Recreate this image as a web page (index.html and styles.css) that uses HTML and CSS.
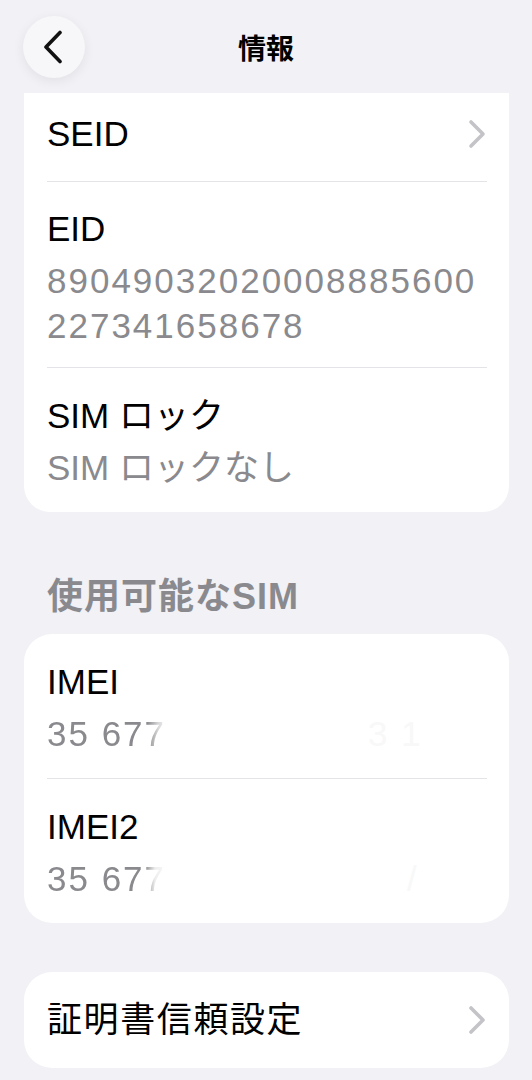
FILE: index.html
```html
<!DOCTYPE html>
<html lang="ja">
<head>
<meta charset="utf-8">
<title>情報</title>
<link rel="stylesheet" href="styles.css">
</head>
<body>
<div class="screen">
  <header class="nav">
    <button class="back" aria-label="戻る">
      <svg width="20" height="34" viewBox="0 0 20 34"><path d="M17 2.5 L3 17 L17 31.5" fill="none" stroke="#111" stroke-width="3.6" stroke-linecap="round" stroke-linejoin="round"/></svg>
    </button>
    <h1 class="title">情報</h1>
    <span class="nav-spacer"></span>
  </header>

  <main class="content">
    <section class="card card-top">
      <div class="row row-link row-seid">
        <span class="label">SEID</span>
        <svg class="chev" width="18" height="30" viewBox="0 0 18 30"><path d="M3 3 L15 15 L3 27" fill="none" stroke="#c4c4c8" stroke-width="3.6" stroke-linecap="round" stroke-linejoin="round"/></svg>
      </div>
      <div class="row row-eid">
        <div class="label">EID</div>
        <div class="value digits">89049032020008885600<br>227341658678</div>
      </div>
      <div class="row row-pair">
        <div class="label">SIM ロック</div>
        <div class="value">SIM ロックなし</div>
      </div>
    </section>

    <h2 class="section-title">使用可能なSIM</h2>

    <section class="card">
      <div class="row row-pair">
        <div class="label">IMEI</div>
        <div class="value digits"><span class="fade">35 677</span><span class="ghost ghost-1">3 1</span></div>
      </div>
      <div class="row row-pair">
        <div class="label">IMEI2</div>
        <div class="value digits"><span class="fade fade-strong">35 677</span><span class="ghost ghost-2">/</span></div>
      </div>
    </section>

    <section class="card card-single">
      <div class="row row-link row-single">
        <span class="label ja-wide">証明書信頼設定</span>
        <svg class="chev" width="18" height="30" viewBox="0 0 18 30"><path d="M3 3 L15 15 L3 27" fill="none" stroke="#c4c4c8" stroke-width="3.6" stroke-linecap="round" stroke-linejoin="round"/></svg>
      </div>
    </section>
  </main>
</div>
</body>
</html>
```

FILE: styles.css
```css
html, body {
  margin: 0;
  padding: 0;
}

body {
  background: #f1f1f6;
  font-family: "Liberation Sans", "Noto Sans CJK JP", sans-serif;
  color: #000;
  width: 532px;
  height: 1080px;
  overflow: hidden;
}

.screen {
  width: 532px;
}

/* ---------- navigation bar ---------- */
.nav {
  height: 93px;
  display: grid;
  grid-template-columns: 1fr auto 1fr;
  align-items: center;
  padding: 0 23px;
  box-sizing: border-box;
}

.back {
  justify-self: start;
  width: 62px;
  height: 62px;
  border: none;
  border-radius: 50%;
  background: #f7f7f9;
  box-shadow: 0 3px 12px rgba(0, 0, 0, 0.07);
  display: flex;
  align-items: center;
  justify-content: center;
  padding: 0 3px 0 0;
  margin-top: 1px;
}

.title {
  margin: 0;
  font-family: "Noto Sans CJK JP", sans-serif;
  font-size: 28px;
  font-weight: 700;
  line-height: 40px;
  color: #000;
}

/* ---------- content ---------- */
.content {
  padding: 0 23px 0 24px;
}

.card {
  background: #fff;
  border-radius: 28px;
  overflow: hidden;
}

.card-top {
  border-radius: 0 0 26px 26px;
}

.card-single {
  margin-top: 49px;
}

.row {
  margin: 0 22px 0 23px;
  border-bottom: 1px solid #e4e4e8;
}

.row:last-child {
  border-bottom: none;
}

.row-link {
  display: flex;
  align-items: center;
  justify-content: space-between;
}

.row-seid {
  padding: 18px 0 25px;
}

.row-eid {
  padding: 24px 0 19px;
}

.row-pair {
  padding: 25px 0 22px;
}

.row-single {
  padding: 25px 0 26px;
}

.chev {
  display: block;
  margin-right: 1px;
  flex: none;
}

.label {
  font-size: 35px;
  line-height: 45px;
  color: #000;
}

.ja-wide {
  letter-spacing: 1.6px;
}

.value {
  margin-top: 7px;
  font-size: 35px;
  line-height: 45px;
  color: #8a8a8e;
  white-space: nowrap;
}

.digits {
  letter-spacing: 2px;
}

.fade {
  -webkit-mask-image: linear-gradient(to right, #000 0, #000 100px, rgba(0,0,0,0.3) 112px, transparent 132px);
  mask-image: linear-gradient(to right, #000 0, #000 100px, rgba(0,0,0,0.3) 112px, transparent 132px);
}

.fade-strong {
  -webkit-mask-image: linear-gradient(to right, #000 0, #000 98px, rgba(0,0,0,0.15) 108px, transparent 126px);
  mask-image: linear-gradient(to right, #000 0, #000 98px, rgba(0,0,0,0.15) 108px, transparent 126px);
}

.ghost {
  color: #f8f8f9;
}

.ghost-1 {
  margin-left: 202px;
}

.ghost-2 {
  margin-left: 241px;
}

.section-title {
  margin: 64px 0 16px 23px;
  font-size: 36px;
  line-height: 42px;
  font-weight: 700;
  color: #8a8a8e;
  letter-spacing: 1px;
}
```
